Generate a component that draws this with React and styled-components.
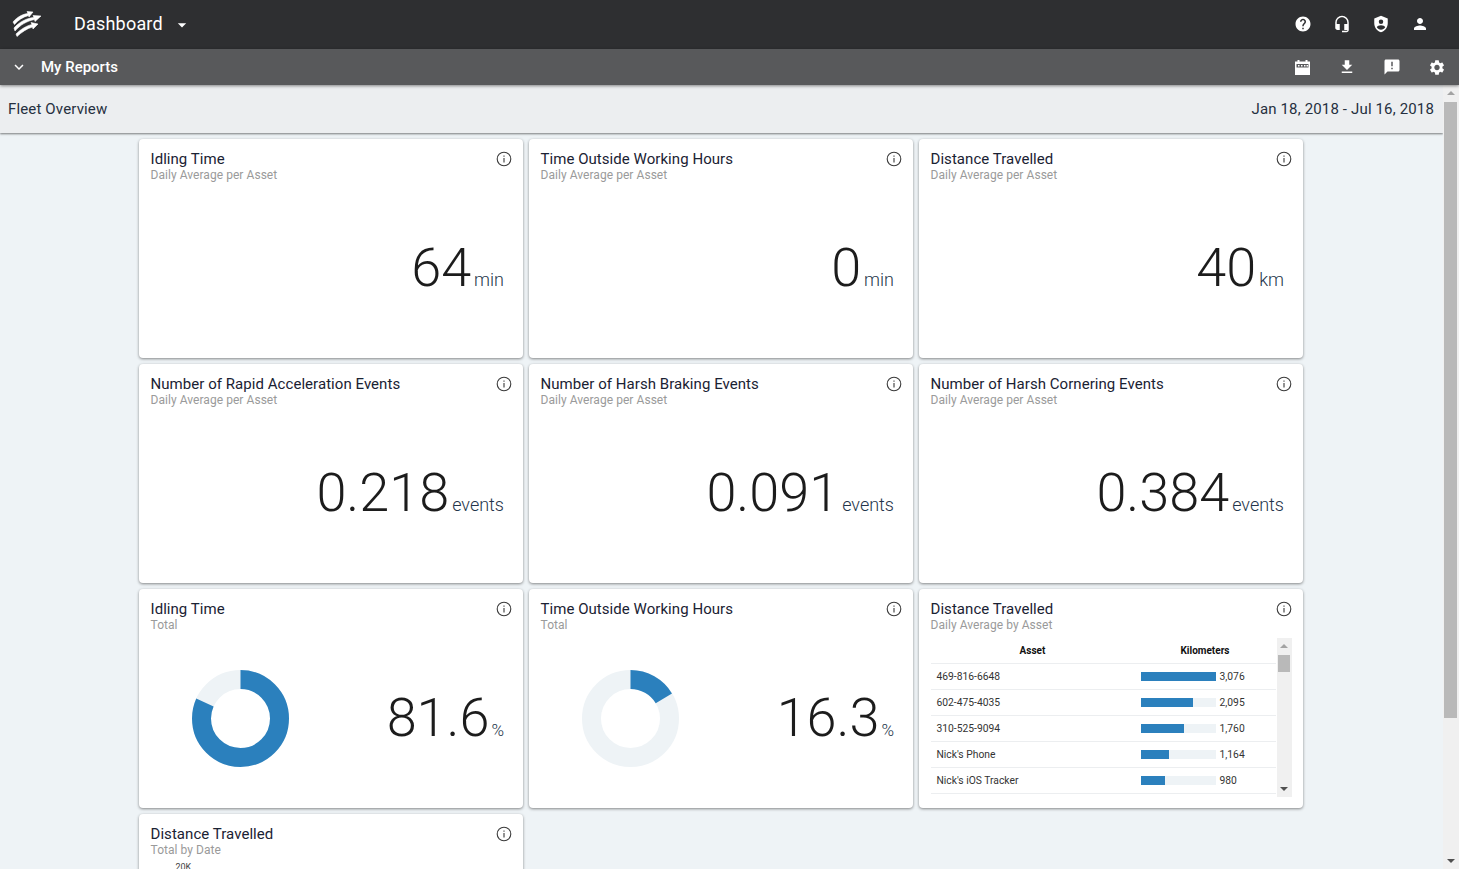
import styled, { createGlobalStyle } from 'styled-components'
import { MdHelp, MdPerson, MdFileDownload, MdAnnouncement, MdSettings, MdHeadsetMic, MdExpandMore, MdArrowDropDown } from 'react-icons/md'

const GlobalStyle = createGlobalStyle`
  html, body {
    margin: 0;
    height: 100%;
    overflow: hidden;
  }
  body {
    font-family: Roboto, "Liberation Sans", sans-serif;
    color: #222;
  }
`

const statCards = [
  { title: 'Idling Time', sub: 'Daily Average per Asset', value: '64', unit: 'min' },
  { title: 'Time Outside Working Hours', sub: 'Daily Average per Asset', value: '0', unit: 'min' },
  { title: 'Distance Travelled', sub: 'Daily Average per Asset', value: '40', unit: 'km' },
  { title: 'Number of Rapid Acceleration Events', sub: 'Daily Average per Asset', value: '0.218', unit: 'events' },
  { title: 'Number of Harsh Braking Events', sub: 'Daily Average per Asset', value: '0.091', unit: 'events' },
  { title: 'Number of Harsh Cornering Events', sub: 'Daily Average per Asset', value: '0.384', unit: 'events' },
]

const rows = [
  { asset: '469-816-6648', km: '3,076', pct: 100 },
  { asset: '602-475-4035', km: '2,095', pct: 69.5 },
  { asset: '310-525-9094', km: '1,760', pct: 58.5 },
  { asset: "Nick's Phone", km: '1,164', pct: 38.5 },
  { asset: "Nick's iOS Tracker", km: '980', pct: 32 },
]

const Page = () => (
  <Shell>
    <GlobalStyle />
    <TopBar>
      <Logo viewBox="0 0 30 26">
        <path d="M1 11C5 6 11 3 16 2.500L15 0.500L21 1L17 6L16.500 4.500C11 6 6 9 2.500 13.500Z" />
        <path d="M2 17C7 11 15 7 22 6.500L21 4.500L29 5L23 10.500L22.500 8.500C15 10 8 14 3 20Z" />
        <path d="M4 23C9 18 15 14.500 20 13.500L19 11.500L26 13L21 18L20.500 16C15 17.500 10 21 5 25.500Z" />
      </Logo>
      <AppTitle>Dashboard</AppTitle>
      <Caret><MdArrowDropDown size={20} /></Caret>
      <IconGroup $gap={21}>
        <TopIcon><MdHelp size={18} /></TopIcon>
        <TopIcon><MdHeadsetMic size={20} /></TopIcon>
        <TopIcon>
          <svg width="18" height="18" viewBox="0 0 24 24" fill="currentColor">
            <path fillRule="evenodd" d="M12 1 3 4.500V11c0 5.600 3.800 10.700 9 12 5.200-1.300 9-6.400 9-12V4.500ZM12 6a3 3 0 1 1 0 6 3 3 0 0 1 0-6Zm0 7.500c2.600 0 5.200 1.100 5.600 2.700-1.200 1.800-3.300 3.200-5.600 3.300-2.300-.1-4.400-1.500-5.600-3.300.4-1.600 3-2.700 5.600-2.700Z" />
          </svg>
        </TopIcon>
        <TopIcon><MdPerson size={20} /></TopIcon>
      </IconGroup>
    </TopBar>
    <SubBar>
      <Chevron><MdExpandMore size={18} /></Chevron>
      <SubTitle>My Reports</SubTitle>
      <IconGroup $gap={27}>
        <TopIcon>
          <svg width="15" height="15" viewBox="0 0 15 15" fill="currentColor">
            <path fillRule="evenodd" d="M2.500 0h2v1.500h6V0h2v1.500H15V15H0V1.500h2.500ZM1.500 4v3.500h12V4ZM3 5h1.500v1.500H3Zm3 0h1.500v1.500H6Zm3 0h1.500v1.500H9Zm2.500 0H13v1.500h-1.500Z" />
          </svg>
        </TopIcon>
        <TopIcon><MdFileDownload size={20} /></TopIcon>
        <TopIcon><MdAnnouncement size={20} /></TopIcon>
        <TopIcon><MdSettings size={19} /></TopIcon>
      </IconGroup>
    </SubBar>
    <Body>
      <Main>
        <FilterBar>
          <span>Fleet Overview</span>
          <span>Jan 18, 2018 - Jul 16, 2018</span>
        </FilterBar>
        <Content>
          <Grid>
            {statCards.map((c) => (
              <Card key={c.title}>
                <CardHead title={c.title} sub={c.sub} />
                <ValueRow>
                  <Value>{c.value}</Value>
                  <Unit>{c.unit}</Unit>
                </ValueRow>
              </Card>
            ))}
            <Card>
              <CardHead title="Idling Time" sub="Total" />
              <DonutRow>
                <Donut pct={81.6} />
                <ValueRow>
                  <Value>81.6</Value>
                  <Unit $small>%</Unit>
                </ValueRow>
              </DonutRow>
            </Card>
            <Card>
              <CardHead title="Time Outside Working Hours" sub="Total" />
              <DonutRow>
                <Donut pct={16.3} />
                <ValueRow>
                  <Value>16.3</Value>
                  <Unit $small>%</Unit>
                </ValueRow>
              </DonutRow>
            </Card>
            <Card>
              <CardHead title="Distance Travelled" sub="Daily Average by Asset" />
              <TableWrap>
                <AssetTable>
                  <thead>
                    <tr>
                      <HeadCell $w={204}>Asset</HeadCell>
                      <HeadCell>Kilometers</HeadCell>
                    </tr>
                  </thead>
                  <tbody>
                    {rows.map((r) => (
                      <tr key={r.asset}>
                        <Cell>{r.asset}</Cell>
                        <Cell>
                          <BarCell>
                            <BarTrack>
                              <BarFill style={{ width: `${r.pct}%` }} />
                            </BarTrack>
                            {r.km}
                          </BarCell>
                        </Cell>
                      </tr>
                    ))}
                  </tbody>
                </AssetTable>
                <Scrollbar $thumbTop={9} $thumbHeight={17} $width={15}>
                  <ArrowUp />
                  <Thumb />
                  <ArrowDown />
                </Scrollbar>
              </TableWrap>
            </Card>
            <Card>
              <CardHead title="Distance Travelled" sub="Total by Date" />
              <Tick>20K</Tick>
            </Card>
          </Grid>
        </Content>
      </Main>
      <Scrollbar $thumbTop={9} $thumbHeight={616} $width={16}>
        <ArrowUp />
        <Thumb />
        <ArrowDown />
      </Scrollbar>
    </Body>
  </Shell>
)

const CardHead = ({ title, sub }) => (
  <Head>
    <div>
      <CardTitle>{title}</CardTitle>
      <CardSub>{sub}</CardSub>
    </div>
    <InfoIcon viewBox="0 0 16 16">
      <circle cx="8" cy="8" r="6.800" />
      <path d="M8 7v4.500M8 4.400v1.300" />
    </InfoIcon>
  </Head>
)

const Donut = ({ pct }) => {
  const r = 39
  const len = 2 * Math.PI * r
  return (
    <DonutSvg viewBox="0 0 97 97">
      <circle cx="48.500" cy="48.500" r={r} fill="none" stroke="#eef3f6" strokeWidth="19" />
      <circle
        cx="48.500"
        cy="48.500"
        r={r}
        fill="none"
        stroke="#2b80bd"
        strokeWidth="19"
        strokeDasharray={`${(len * pct) / 100} ${len}`}
        transform="rotate(-90 48.500 48.500)"
      />
    </DonutSvg>
  )
}

const Shell = styled.div`
  display: flex;
  flex-direction: column;
  height: 100vh;
  overflow: hidden;
  background: #eef3f6;
`

const TopBar = styled.header`
  display: flex;
  align-items: center;
  flex: 0 0 49px;
  padding: 0 30px 2px 12px;
  box-sizing: border-box;
  background: #2e2f31;
  color: #fff;
`

const Logo = styled.svg`
  width: 30px;
  height: 26px;
  fill: #fff;
  stroke: #fff;
  stroke-width: 0.6;
`

const AppTitle = styled.div`
  margin-left: 32px;
  font-size: 18px;
  letter-spacing: 0.2px;
`

const Caret = styled.span`
  display: flex;
  margin: 3px 0 0 9px;
`

const IconGroup = styled.div`
  display: flex;
  align-items: center;
  gap: ${(p) => p.$gap}px;
  margin-left: auto;
`

const TopIcon = styled.span`
  display: flex;
  justify-content: center;
  width: 18px;
  color: #fff;
`

const SubBar = styled.div`
  position: relative;
  z-index: 2;
  display: flex;
  align-items: center;
  flex: 0 0 36px;
  padding: 0 13px 0 10px;
  box-sizing: border-box;
  background: #58595b;
  color: #fff;
  box-shadow: 0 1px 3px rgba(0, 0, 0, 0.45);
`

const Chevron = styled.span`
  display: flex;
`

const SubTitle = styled.div`
  margin-left: 13px;
  font-size: 15px;
  font-weight: 500;
`

const Body = styled.div`
  display: flex;
  flex: 1;
  min-height: 0;
`

const Main = styled.main`
  display: flex;
  flex-direction: column;
  flex: 1;
  min-width: 0;
`

const FilterBar = styled.div`
  display: flex;
  align-items: center;
  justify-content: space-between;
  flex: 0 0 48px;
  padding: 0 9px 0 8px;
  box-sizing: border-box;
  background: #eceef0;
  font-size: 15px;
  letter-spacing: 0.15px;
  color: #263040;
  box-shadow: 0 1px 2px rgba(0, 0, 0, 0.5);
  position: relative;
`

const Content = styled.div`
  flex: 1;
  min-height: 0;
  overflow: hidden;
  padding: 6px 1px 0 0;
`

const Grid = styled.div`
  display: grid;
  grid-template-columns: repeat(3, 384px);
  grid-auto-rows: 219px;
  gap: 6px;
  justify-content: center;
`

const Card = styled.section`
  display: flex;
  flex-direction: column;
  padding: 12px 11px 0 11.5px;
  box-sizing: border-box;
  background: #fff;
  border-radius: 4px;
  box-shadow: 0 1px 3px rgba(0, 0, 0, 0.45);
`

const Head = styled.div`
  display: flex;
  justify-content: space-between;
  align-items: flex-start;
  height: 33px;
`

const CardTitle = styled.div`
  font-size: 15px;
  letter-spacing: 0.05px;
  line-height: 17px;
  color: #1a2233;
`

const CardSub = styled.div`
  font-size: 12px;
  letter-spacing: 0.05px;
  line-height: 14px;
  color: #9a9a9a;
`

const InfoIcon = styled.svg`
  width: 16px;
  height: 16px;
  fill: none;
  stroke: #3a3a3a;
  stroke-width: 1.100;
`

const ValueRow = styled.div`
  display: flex;
  justify-content: flex-end;
  align-items: baseline;
  margin-top: 51px;
  padding-right: 8px;
`

const Value = styled.span`
  font-size: 54px;
  line-height: 66px;
  font-weight: 300;
  color: #1c1c1c;
`

const Unit = styled.span`
  margin-left: ${(p) => (p.$small ? 2 : 3)}px;
  font-size: ${(p) => (p.$small ? 17 : 18)}px;
  font-weight: 300;
  color: #24344a;
`

const DonutRow = styled.div`
  display: flex;
  justify-content: space-between;
  align-items: flex-start;
`

const DonutSvg = styled.svg`
  flex: none;
  width: 97px;
  height: 97px;
  margin: 36px 0 0 41.500px;
`

const TableWrap = styled.div`
  display: flex;
  align-items: flex-start;
  gap: 1px;
  margin-top: 4px;
`

const AssetTable = styled.table`
  width: 345px;
  border-collapse: collapse;
  table-layout: fixed;
`

const HeadCell = styled.th`
  width: ${(p) => (p.$w ? `${p.$w}px` : 'auto')};
  height: 25px;
  padding: 0;
  font-size: 10px;
  font-weight: 700;
  color: #111;
  border-bottom: 1px solid #eceef0;
`

const Cell = styled.td`
  height: 25px;
  padding: 0 0 0 6px;
  font-size: 10.300px;
  color: #333;
  border-bottom: 1px solid #eceef0;
`

const BarCell = styled.div`
  display: flex;
  align-items: center;
  gap: 4px;
`

const BarTrack = styled.div`
  width: 75px;
  height: 9px;
  background: #eef3f6;
`

const BarFill = styled.div`
  height: 100%;
  background: #2b80bd;
`

const Scrollbar = styled.div`
  position: relative;
  flex: none;
  width: ${(p) => p.$width}px;
  align-self: stretch;
  height: ${(p) => (p.$width === 15 ? '159px' : 'auto')};
  background: #f0f0f0;
  --thumb-top: ${(p) => p.$thumbTop + 8}px;
  --thumb-height: ${(p) => p.$thumbHeight}px;
`

const Thumb = styled.div`
  position: absolute;
  left: 1px;
  right: 2px;
  top: var(--thumb-top);
  height: var(--thumb-height);
  background: #b9b9b9;
`

const ArrowUp = styled.div`
  position: absolute;
  top: 6px;
  left: 50%;
  margin-left: -4px;
  border: 4px solid transparent;
  border-top: 0;
  border-bottom: 4px solid #a3a3a3;
`

const ArrowDown = styled.div`
  position: absolute;
  bottom: 6px;
  left: 50%;
  margin-left: -4px;
  border: 4px solid transparent;
  border-bottom: 0;
  border-top: 4px solid #505050;
`

const Tick = styled.div`
  margin: 3px 0 0 25px;
  font-size: 9px;
  color: #444;
`

export default Page
